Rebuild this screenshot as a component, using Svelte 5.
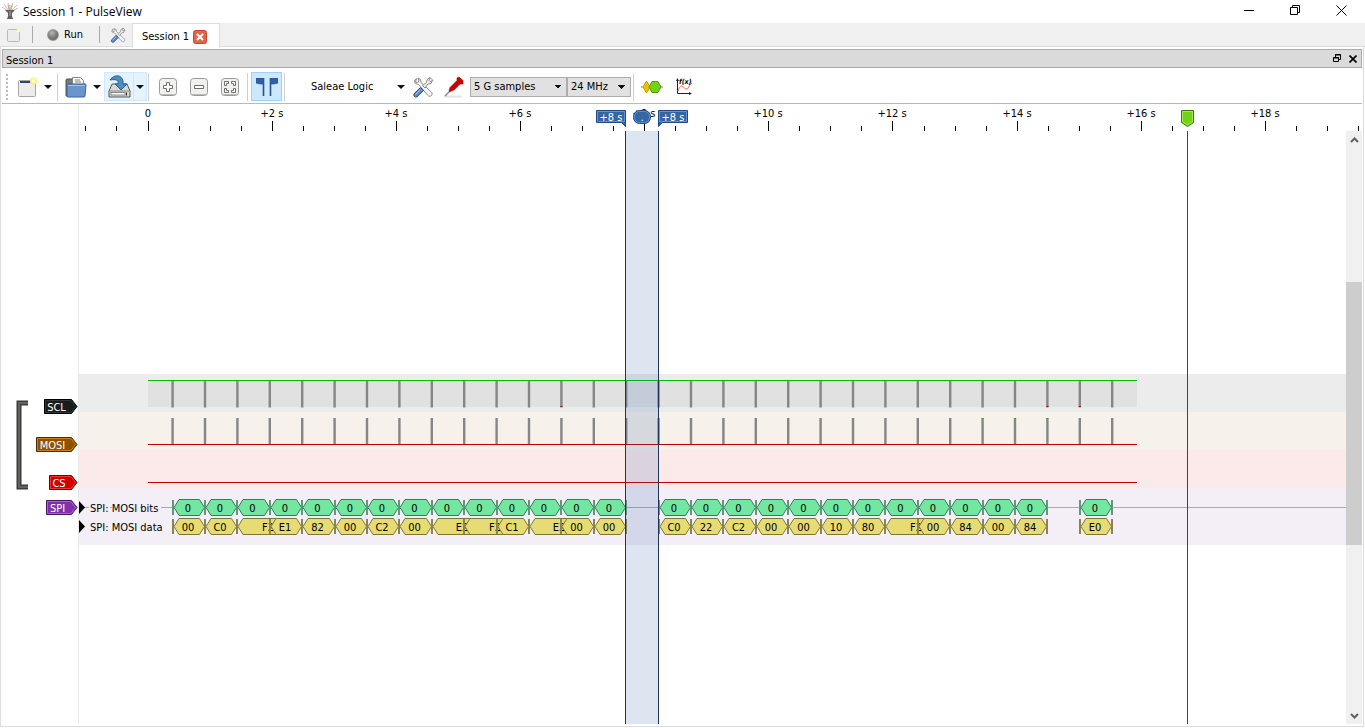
<script>
  const P = 31.04;
  const ticks = Array.from({ length: 42 }, (_, i) => i - 2).map((k) => ({
    x: Math.round(147.5 + k * P),
    major: k % 4 === 0,
    label: k === 0 ? '0' : `+${k / 2} s`,
  }));
  const at = (k) => 93.6 + 32.4 * k;
  const px = (k) => Math.round(at(k));
  const pulses = Array.from({ length: 30 }, (_, k) => k);
  const redFoot = [12, 27, 28];
  const greenTop = [25, 26, 27];
  const data = ['00', 'C0', 'F2', 'E1', '82', '00', 'C2', '00', 'E2', 'F2', 'C1', 'E2', '00', '00', null,
    'C0', '22', 'C2', '00', '00', '10', '80', 'F2', '00', '84', '00', '84', null, 'E0'];
  const frames = data.map((v, k) => ({ v, k, wide: v === 'F2' || v === 'E2' })).filter((f) => f.v);
  const hex = (l, r, t, h) =>
    `M${l} ${t + h / 2}L${l + 5} ${t}H${r - 5}L${r} ${t + h / 2}L${r - 5} ${t + h}H${l + 5}Z`;
  const channels = [
    { name: 'SCL', y: 275, x: 44, fill: '#171c1c', edge: '#000', light: '#2e3638' },
    { name: 'MOSI', y: 313, x: 36, fill: '#8f5202', edge: '#4d2c00', light: '#d07c10' },
    { name: 'CS', y: 351, x: 49, fill: '#cc0000', edge: '#6d0000', light: '#ff3030' },
    { name: 'SPI', y: 376, x: 46, fill: '#8030a8', edge: '#451a5c', light: '#b45ce0' },
  ];
</script>

{#snippet tools()}
  <path d="M4.500 2.500c-2 1-2.600 3.500-1 5l3 1 9 10.500c1 1.500 3 1.700 4 .5s.8-3-.7-4L9 6.500 8.500 3.500 6 2l1 3-1.500 1.500-2-.5z" fill="#f4f4f4" stroke="#888a85"/>
  <path d="M18 1.500l3 3M20.500 4.500l-1.500 3-3 .5-3 4-2.500-2.500 4-3L15 3.500l3-2 -1 3 1 1z" fill="#eee" stroke="#888a85"/>
  <path d="M8.500 11.500l3 3-6.500 6.300c-2 1-3.800-1-3-3z" fill="#5f8cc4" stroke="#204a87"/>
  <path d="M8.500 13.500l-5 5" stroke="#a9c6e8" fill="none"/>
{/snippet}

<div class="window">
  <header class="title">
    <svg width="18" height="18" viewBox="0 0 18 18" aria-hidden="true">
      <path d="M3 2l4 6M7 1l1.500 7M12 1L9.500 8M16 3l-5 5M1 5l6 4M17 6l-6 3" stroke="#c4c0ba" stroke-width="1" fill="none"/>
      <path d="M7 3l1 5M11 3l-1 5" stroke="#d8a08a" fill="none"/><path d="M9 3v5" stroke="#9db59a"/>
      <path d="M4 8h10l-3 3v3l1 3H6l1-3v-3z" fill="#655f5b"/>
      <path d="M9 9v5" stroke="#aaa"/>
    </svg>
    <h1>Session 1 - PulseView</h1>
    <button aria-label="Minimize"><svg width="11" height="11"><path d="M0 5.500h10" stroke="#000"/></svg></button>
    <button aria-label="Restore"><svg width="11" height="11" fill="none" stroke="#000"><path d="M.5 2.500h7v7h-7zM2.500 2.500v-2h7v7h-2"/></svg></button>
    <button aria-label="Close"><svg width="11" height="11"><path d="M.5.5l10 10M10.500.5l-10 10" stroke="#000"/></svg></button>
  </header>

  <nav class="tabs">
    <button class="new" aria-label="New session"><svg width="14" height="14"><rect x=".5" y="1.500" width="12" height="12" rx="1" fill="#ececec" stroke="#b8b8b6"/><circle cx="11.500" cy="2.500" r="2" fill="#fff9b0"/></svg></button>
    <i class="bar"></i>
    <button class="run"><svg width="12" height="12"><defs><radialGradient id="ball" cx=".4" cy=".3"><stop offset="0" stop-color="#b5b7b2"/><stop offset="1" stop-color="#737571"/></radialGradient></defs><circle cx="6" cy="6" r="5.500" fill="url(#ball)" stroke="#8c8e8a" stroke-width=".6"/></svg>Run</button>
    <i class="bar"></i>
    <button class="gear" aria-label="Settings"><svg width="16" height="16" viewBox="0 0 22 22">{@render tools()}</svg></button>
    <div class="tab"><span>Session 1</span><button aria-label="Close session"><svg width="14" height="14"><rect x=".5" y=".5" width="13" height="13" rx="2" fill="#e0664b" stroke="#c8452b"/><path d="M4 4l6 6M10 4l-6 6" stroke="#fff" stroke-width="2"/></svg></button></div>
  </nav>

  <main>
    <div class="dock"><span>Session 1</span>
      <button aria-label="Float"><svg width="8" height="9" fill="none" stroke="#000"><path d="M2.500 3V.5h5v5H6M2 1h6M.5 3.500h5v4h-5zM0 4h6"/></svg></button>
      <button aria-label="Close"><svg width="8" height="8"><path d="M.5.5l7 7M7.500.5l-7 7" stroke="#000" stroke-width="1.600"/></svg></button>
    </div>

    <div class="toolbar">
      <i class="grip"></i>
      <button class="ic file" aria-label="New"><svg width="20" height="20"><rect x=".5" y="3.500" width="17" height="16" rx="1" fill="#ececec" stroke="#a5a6a3"/><path d="M2 5h14" stroke="#204a87" stroke-width="2"/><circle cx="15.500" cy="4" r="3.600" fill="#fff36a"/><circle cx="15.500" cy="4" r="1.800" fill="#fffde0"/></svg></button>
      <button class="arrow" aria-label="New menu"></button>
      <i class="sep"></i>
      <button class="ic open" aria-label="Open"><svg width="22" height="22"><path d="M1 20V4q0-1 1-1h6v4h11v13z" fill="#777" stroke="#555"/><path d="M7.500 9V1.500h8l3 3V10z" fill="#f5f5f5" stroke="#888"/><path d="M10 4h5M10 6h6" stroke="#888"/><path d="M2 9q0-1 1-1h17q1 0 1 1l-1 11q0 1-1 1H3q-1 0-1-1z" fill="#6b95cb" stroke="#3465a4"/><path d="M3 9.500h17" stroke="#a8c3e4"/></svg></button>
      <button class="arrow" aria-label="Open menu"></button>
      <div class="save"><button class="ic" aria-label="Save"><svg width="23" height="23"><path d="M4 9h15l3 7v6H1v-6z" fill="#d8d9d6" stroke="#555753"/><path d="M1.500 16h20" stroke="#888a85"/><rect x="3" y="17.500" width="14" height="2.500" fill="#fff" stroke="#888"/><path d="M18.500 17.500v3" stroke="#222"/><path d="M2 5C7-2 16 0 15 9h4l-6 6-6-6h3c1-4-2-5-8-4z" fill="#4b8fc2" stroke="#27608c"/></svg></button><button class="arrow" aria-label="Save menu"></button></div>
      <i class="sep"></i>
      {#each [['Zoom in', 'M7.500 4.500h3v3h3v3h-3v3h-3v-3h-3v-3h3z'], ['Zoom out', 'M4.500 7.500h9v3h-9z'], ['Zoom to fit', 'M3.500 7.500v-4h4v2h-2v2zM10.500 3.500h4v4h-2v-2h-2zM3.500 10.500v4h4v-2h-2v-2zM10.500 14.500h4v-4h-2v2h-2z']] as [label, d]}
        <button class="ic zoom" aria-label={label}><svg width="18" height="18"><rect x=".5" y=".5" width="17" height="17" rx="3" fill="#f0f0ee" stroke="#9a9b98"/><path d="M2 16.500h14" stroke="#bbb"/><path {d} fill="#fff" stroke="#6d6f6b"/></svg></button>
      {/each}
      <i class="sep mid"></i>
      <button class="ic cursors" aria-label="Show cursors"><svg width="22" height="18"><path d="M0 0h8v18H7V6H4L0 5zM22 0h-8v18h1V6h3l4-1z" fill="#2f5fa5" stroke="#204a87" stroke-width=".6"/></svg></button>
      <i class="sep"></i>
      <button class="device">Saleae Logic</button>
      <button class="arrow" aria-label="Device menu"></button>
      <button class="ic config" aria-label="Configure device"><svg width="22" height="22">{@render tools()}</svg></button>
      <button class="ic probe" aria-label="Configure channels"><svg width="20" height="22"><path d="M0 20.500h18" stroke="#e4e4e4" stroke-width="2"/><path d="M1 20l7-7" stroke="#888" stroke-width="1.500"/><path d="M15 1l4 3.500V8h-3l-6 6-4 1.500L5 15l1-3.500 7-7V2z" fill="#cc0000" stroke="#a40000" stroke-width=".6"/></svg></button>
      <select class="samples" aria-label="Sample count"><option>5 G samples</option></select>
      <select class="rate" aria-label="Sample rate"><option>24 MHz</option></select>
      <i class="sep"></i>
      <button class="ic dec" aria-label="Add decoder"><svg width="22" height="12"><path d="M0 6h22" stroke="#888"/><path d="M2 6l3-5.500h1L9 6l-3 5.500H5z" fill="#f0c000" stroke="#c4a000"/><path d="M8 6l3-5.500h6L20 6l-3 5.500h-6z" fill="#73d216" stroke="#4e9a06"/></svg></button>
      <button class="ic math" aria-label="Add math signal"><svg width="18" height="18"><path d="M2.500 2v13.500H16" fill="none" stroke="#222"/><path d="M1 3l1.500-3L4 3zM14 14l3 1.500-3 1.500z" fill="#222"/><path d="M3 13C6 4 8 10 11 11S14 6 17 5" fill="none" stroke="#ef5a5a"/><text class="fx" x="4" y="6">f(x)</text></svg></button>
    </div>

    <svg class="ruler" width="100%" height="27">
      <path d="M76.500 0v27" stroke="#e9e9e9"/>
      {#each ticks as t}
        <path d="M{t.x - 1.5} {t.major ? 17 : 22}V27" stroke="#000"/>
        {#if t.major}<text x={t.x - 2} y="13" text-anchor="middle">{t.label}</text>{/if}
      {/each}
      <g fill="#3465a4" stroke="#204a87">
        <path d="M594.500 6.500h29v16l-4-4h-25z"/><path d="M656.500 6.500h29v12h-25l-4 4z"/>
        <rect x="631.500" y="6.500" width="17" height="13" rx="6"/>
      </g>
      <g fill="none" stroke="#5b94dc"><path d="M595.500 7.500h27v10h-27zM657.500 7.500h27v10h-27z"/><rect x="632.500" y="7.500" width="15" height="11" rx="5"/></g>
      <g class="mark"><text x="609" y="17" text-anchor="middle">+8 s</text><text x="671" y="17" text-anchor="middle">+8 s</text><text x="640" y="17" text-anchor="middle">.</text></g>
      <path d="M1179.500 6.500h12v12l-6 4-6-4z" fill="#73d216" stroke="#3c7a06"/>
      <path d="M1180.500 7.500h10v10l-5 3.500-5-3.500z" fill="none" stroke="#9cec50"/>
    </svg>

    <div class="view">
      <svg class="heads" width="77" height="100%">
        <path d="M26 272H17v84h9" fill="none" stroke="#3c3e3b" stroke-width="5"/>
        <path d="M26 272H17v84h9" fill="none" stroke="#62645f" stroke-width="2"/>
        {#each channels as c}
          <path d="M{c.x - 1.5} {c.y - 6.5}H69.500L75 {c.y + .5}L69.500 {c.y + 7.500}H{c.x - 1.5}Z" fill={c.fill} stroke={c.edge}/>
          <path d="M{c.x - .5} {c.y - 5.5}H69L73.500 {c.y + .5}L69 {c.y + 6.500}H{c.x - .5}Z" fill="none" stroke={c.light}/>
          <text x={(c.x + 65) / 2} y={c.y + 5} text-anchor="middle">{c.name}</text>
        {/each}
      </svg>
      <svg class="trace" width="100%" height="100%">
        <rect y="243" width="100%" height="38" fill="#ececec"/>
        <rect y="281" width="100%" height="38" fill="#f6f1ea"/>
        <rect y="319" width="100%" height="38" fill="#fceaea"/>
        <rect y="357" width="100%" height="57" fill="#f4eff7"/>
        <rect x="69" y="249" width="989" height="27" fill="#e1e1e1"/>
        {#each pulses as k}
          {@const x = at(k)}
          <path d="M{x} 249v27.500M{x} 287v26" stroke="#868686" stroke-width="2.400"/>
          {#if redFoot.includes(k)}<path d="M{x - 1} 275.500h2" stroke="#c00000"/>{/if}
          {#if greenTop.includes(k)}<path d="M{x - 1} 287.500h2" stroke="#20b020"/>{/if}
        {/each}
        <path d="M69 249.500h989" stroke="#00c000"/>
        <path d="M69 313.500h989M69 351.500h989" stroke="#c00000"/>
        <path d="M0 376.500H10M31 376.500h2M61 376.500h2M82 376.500H94M547 376.500h33M969 376.500h32" stroke="#aaa"/>
        <svg x="1034" y="376" width="100%" height="1"><rect width="100%" height="1" fill="#aaa"/></svg>
        {#each frames as f}
          {@const l = px(f.k)}
          {@const r = px(f.k + 1)}
          <path d="M{l} 369v15M{r} 369v15" stroke="#5d9a7c" stroke-width="2"/>
          <path d={hex(l + 1, r - .5, 368.5, 16)} fill="#73e6a0" stroke="#347c55"/>
          <text x={(l + r) / 2 - 1} y="381" text-anchor="middle">0</text>
          <path d={hex(l + 1, f.wide ? r + 12 : r - .5, 387.5, 16)} fill="#e6dc73" stroke="#7c7634"/>
          <path d="M{l} 388v15M{r} 388v15" stroke="#8b854b" stroke-width="2"/>
          <text x={f.wide ? r - 2 : (l + r) / 2 - 1} y="400" text-anchor="middle">{f.v}</text>
        {/each}
        <path d="M0 370l6 6.500-6 6.500zM0 389l6 6.500-6 6.500z"/>
        <text x="11" y="381">SPI: MOSI bits</text><text x="11" y="400">SPI: MOSI data</text>
        <rect x="547" width="32" height="100%" fill="#3465a4" fill-opacity=".17"/>
        <rect x="546" width="1" height="100%" fill="#1c3558"/><rect x="579" width="1" height="100%" fill="#1c3558"/>
        <rect x="1108" width="1" height="100%" fill="#2d5a10"/>
      </svg>
      <div class="scroll">
        <button aria-label="Scroll up"><svg width="9" height="6"><path d="M1 5l3.500-3.500L8 5" fill="none" stroke="#606060" stroke-width="2"/></svg></button>
        <i class="thumb"></i>
        <button aria-label="Scroll down"><svg width="9" height="6"><path d="M1 1l3.500 3.500L8 1" fill="none" stroke="#606060" stroke-width="2"/></svg></button>
      </div>
    </div>
  </main>
</div>

<style>
  :global(body) { margin: 0; background: #fff; }
  .window { height: 100vh; display: flex; flex-direction: column; overflow: hidden; font: 11px/14px "DejaVu Sans Condensed", "DejaVu Sans", sans-serif; color: #000; }
  button { border: 0; padding: 0; background: none; font: inherit; color: inherit; display: flex; align-items: center; justify-content: center; flex: none; }
  svg { display: block; flex: none; }
  text { font-size: 11px; }
  .title { display: flex; height: 23px; padding: 0 1px; }
  .title > svg { margin-top: 2px; }
  h1 { flex: 1; margin: 0; padding-left: 4px; font: 12px/23px "Open Sans", sans-serif; }
  .title button { width: 46px; height: 20px; }
  .tabs { display: flex; align-items: center; height: 24px; background: #f0f0f0; padding-left: 7px; position: relative; z-index: 1; margin-bottom: -1px; border-bottom: 1px solid #dcdcdc; box-sizing: border-box; }
  .bar { width: 1px; height: 17px; background: #aaa; flex: none; }
  .new { margin-right: 11px; }
  .run { gap: 5px; padding: 1px 16px 0 14px; }
  .gear { padding: 0 6px 0 10px; }
  .tab { display: flex; align-items: center; gap: 4px; width: 88px; height: 25px; box-sizing: border-box; margin-bottom: -2px; padding: 1px 0 0 9px; background: #fff; border: 1px solid #dcdcdc; border-bottom: 0; white-space: nowrap; }
  main { flex: 1; min-height: 0; display: flex; flex-direction: column; margin: 0 1px 1px 0; border: 1px solid #dcdcdc; padding: 2px 1px; }
  .dock { display: flex; align-items: center; height: 17px; padding: 0 4px 0 3px; background: #dadada; border: 1px solid #aaa; gap: 8px; }
  .dock span { flex: 1; padding-top: 4px; }
  .toolbar { display: flex; align-items: center; height: 33px; padding-top: 2px; border-bottom: 1px solid #b8b8b8; }
  .grip { width: 2px; height: 26px; margin: 0 10px 0 4px; background: repeating-linear-gradient(#bbb 0 2px, #fff 2px 4px); }
  .sep { width: 1px; height: 28px; background: #d0d0d0; flex: none; }
  .arrow { width: 12px; height: 28px; }
  .arrow::after { content: ""; border: 4px solid transparent; border-top-color: #111; border-bottom: 0; }
  .file { margin-right: 4px; }
  .arrow + .sep { margin: 0 7px 0 3px; }
  .open { margin-right: 4px; }
  .save { display: flex; margin: 0 1px; border: 1px solid #cce8ff; background: #e5f3ff; }
  .save .ic { width: 29px; height: 27px; border-right: 1px solid #cce8ff; }
  .save .arrow { height: 27px; }
  .zoom { width: 31px; }
  .save + .sep { margin-right: 3px; }
  .mid { margin: 0 3px 0 2px; }
  .cursors { width: 31px; height: 29px; margin-right: 2px; box-sizing: border-box; background: #cce8ff; border: 1px solid #99d1ff; }
  .device { margin-left: 26px; width: 84px; justify-content: flex-start; }
  .config { margin: 0 10px 0 5px; }
  .probe { margin-right: 6px; }
  select { appearance: none; height: 20px; box-sizing: border-box; border: 1px solid #adadad; border-radius: 0; padding: 0 3px; font: inherit; color: #000; background: conic-gradient(from -45deg at 50% 100%, #111 90deg, transparent 0) right 4px center / 8px 4px no-repeat, #e1e1e1; }
  .samples, .rate { background: linear-gradient(to bottom left, #111 50%, transparent 0) right 8px top 7px / 4px 4px no-repeat, linear-gradient(to bottom right, #111 50%, transparent 0) right 4px top 7px / 4px 4px no-repeat, #e1e1e1; }
  .samples { width: 97px; }
  .rate { width: 64px; margin-right: 2px; }
  .dec { margin: 0 12px 0 7px; }
  .fx { font-size: 7px; font-style: italic; font-weight: bold; }
  .mark text, .heads text { fill: #fff; }
  .view { flex: 1; min-height: 0; display: flex; }
  .heads { box-sizing: border-box; border-right: 1px solid #e9e9e9; }
  .trace { flex: 1; min-width: 0; }
  .scroll { width: 16px; display: flex; flex-direction: column; background: #f0f0f0; }
  .scroll button { height: 17px; }
  .thumb { height: 263px; margin-top: auto; margin-bottom: 162px; background: #cdcdcd; }
</style>
